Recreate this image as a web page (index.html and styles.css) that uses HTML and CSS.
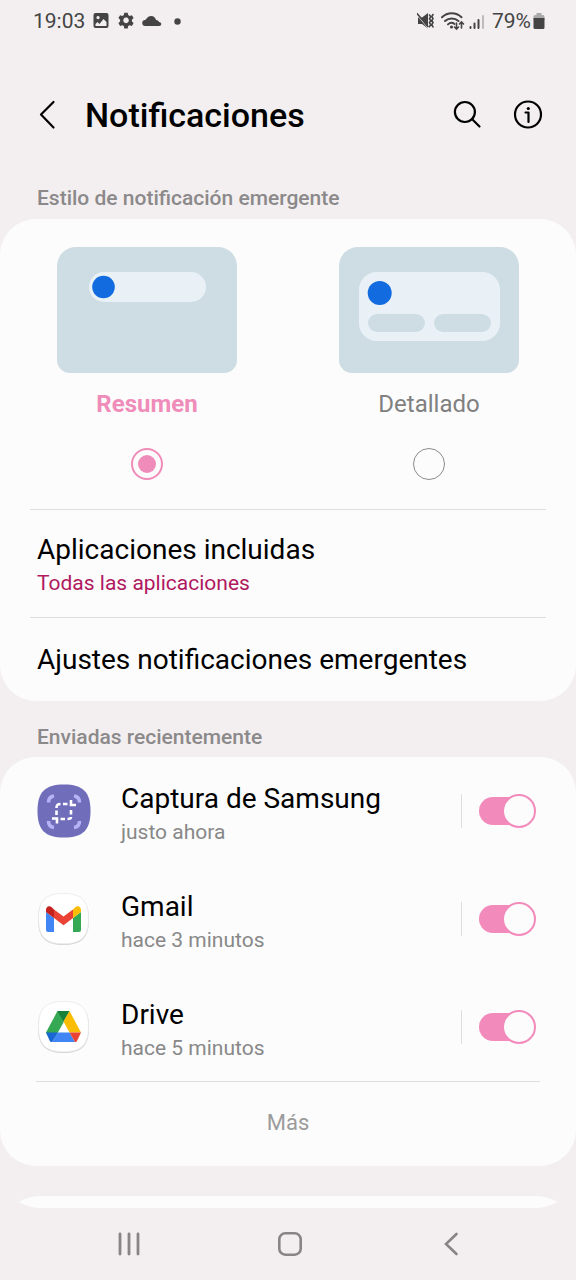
FILE: index.html
```html
<!DOCTYPE html>
<html lang="es">
<head>
<meta charset="utf-8">
<meta name="viewport" content="width=device-width, initial-scale=1">
<title>Notificaciones</title>
<link rel="stylesheet" href="styles.css">
</head>
<body>
<div class="status">
  <time class="clock">19:03</time>
  <svg class="status-left" width="90" height="18" viewBox="0 0 90 18" fill="#444" aria-hidden="true">
    <path fill-rule="evenodd" d="M2.500 1h11a2 2 0 0 1 2 2v11a2 2 0 0 1-2 2h-11a2 2 0 0 1-2-2V3a2 2 0 0 1 2-2zM2.500 12v2h11v-4l-3-3-4 5-2-2zM5 4a1.600 1.600 0 1 0 .1 0z"/>
    <path fill-rule="evenodd" d="M31.300 .8h3.400l.5 2.200 1.500.9 2.200-.7 1.700 2.900-1.700 1.600v1.700l1.700 1.600-1.700 2.900-2.200-.7-1.500.9-.5 2.300h-3.400l-.5-2.300-1.500-.9-2.200.7-1.700-2.900 1.700-1.600V7.700l-1.700-1.600 1.700-2.900 2.200.7 1.500-.9zM33 5.600a2.800 2.800 0 1 0 .1 0z"/>
    <path d="M52.500 14a3 3 0 0 1-.5-6C53.500 7.500 54.500 4 58 4c3 0 4.500 2 5 4 2 0 2.500 1 3 2 3 0 3 4 0 4z"/>
    <circle cx="84.500" cy="9.500" r="3.200"/>
  </svg>
  <svg class="status-right" width="70" height="20" viewBox="0 0 70 20" fill="none" stroke="#444" stroke-width="2" stroke-linecap="round" aria-hidden="true">
    <path d="M1 6.500h4l6-4.500v15.500L5 13H1z" fill="#444" stroke="none"/>
    <path d="M0 4l11 13" stroke="#f3eff0" stroke-width="1"/>
    <path d="M0 2.500l11 13" stroke-width="1.600"/>
    <path d="M12.500 4l1.200 1.700-1.200 2 1.200 2-1.200 2 1.200 2-1.200 2M16 3.500l-1.200 2 1.200 2-1.200 2 1.200 2-1.200 2 1.200 2.500" stroke-width="1.600"/>
    <path d="M25 6.200a14 14 0 0 1 19.500 0M28 10a10 10 0 0 1 13.500 0M31 13.400a5 5 0 0 1 6.500-.4"/>
    <circle cx="34.500" cy="16" r="1.600" fill="#444" stroke="none"/>
    <path d="M39.500 12v6m-2-2l2 2 2-2M44.500 17v-6m-2 2l2-2 2 2" stroke-width="1.600"/>
    <path d="M53.500 16v1M57.500 12.500v4.500M61.500 9v8"/>
    <path d="M66 5v12" stroke="#bbb"/>
  </svg>
  <span class="charge">79%</span>
  <svg width="12" height="18" viewBox="0 0 12 18" aria-hidden="true">
    <path d="M3.500 1h5v2H10a1.500 1.500 0 0 1 1.500 1.500V8H.5V4.500A1.500 1.500 0 0 1 2 3h1.500z" fill="#aaa"/>
    <path d="M.5 6h11v9.500A1.500 1.500 0 0 1 10 17H2A1.500 1.500 0 0 1 .5 15.500z" fill="#444"/>
  </svg>
</div>

<header class="header">
  <button class="icon-button" aria-label="Atrás">
    <svg width="20" height="30" viewBox="0 0 20 30" fill="none" stroke="#000" stroke-width="2.200" stroke-linecap="round" stroke-linejoin="round"><path d="M16.500 2L4 14.500l12.500 13"/></svg>
  </button>
  <h1 class="title">Notificaciones</h1>
  <button class="icon-button" aria-label="Buscar">
    <svg width="30" height="30" viewBox="0 0 30 30" fill="none" stroke="#000" stroke-width="2.200" stroke-linecap="round"><circle cx="12.900" cy="12" r="10"/><path d="M20.200 19.300l7.300 7.200"/></svg>
  </button>
  <button class="icon-button" aria-label="Información">
    <svg width="30" height="30" viewBox="0 0 30 30" fill="none" stroke="#000" stroke-width="2.200" stroke-linecap="round" stroke-linejoin="round"><circle cx="15" cy="14.500" r="13"/><path d="M12.500 12.500h3V22"/><circle cx="15.300" cy="8.500" r="1.600" fill="#000" stroke="none"/></svg>
  </button>
</header>

<main>
  <h2 class="section-label" id="style-label">Estilo de notificación emergente</h2>
  <section class="card">
    <div class="styles" role="radiogroup" aria-labelledby="style-label">
      <label class="style">
        <svg width="180" height="126" viewBox="0 0 180 126" aria-hidden="true">
          <path d="M19 0h142a19 19 0 0 1 19 19v94a13 13 0 0 1-13 13H13a13 13 0 0 1-13-13V19A19 19 0 0 1 19 0z" fill="#cedde4"/>
          <rect x="32" y="25" width="117" height="30" rx="15" fill="#e9f1f7"/>
          <circle cx="46.500" cy="40" r="11.300" fill="#126ce0"/>
        </svg>
        <span class="style-name">Resumen</span>
        <input class="radio" type="radio" name="style" checked>
      </label>
      <label class="style">
        <svg width="180" height="126" viewBox="0 0 180 126" aria-hidden="true">
          <path d="M19 0h142a19 19 0 0 1 19 19v94a13 13 0 0 1-13 13H13a13 13 0 0 1-13-13V19A19 19 0 0 1 19 0z" fill="#cedde4"/>
          <rect x="20" y="25" width="141" height="69" rx="18" fill="#e9f1f7"/>
          <circle cx="40.700" cy="46" r="12" fill="#126ce0"/>
          <rect x="29" y="67" width="57" height="18" rx="9" fill="#cedde4"/>
          <rect x="95" y="67" width="57" height="18" rx="9" fill="#cedde4"/>
        </svg>
        <span class="style-name">Detallado</span>
        <input class="radio" type="radio" name="style">
      </label>
    </div>
    <button class="item">
      <span class="name">Aplicaciones incluidas</span>
      <span class="detail accent">Todas las aplicaciones</span>
    </button>
    <button class="item single">
      <span class="name">Ajustes notificaciones emergentes</span>
    </button>
  </section>

  <h2 class="section-label recent">Enviadas recientemente</h2>
  <section class="card">
    <div class="app">
      <svg width="54" height="54" viewBox="0 0 54 54" aria-hidden="true">
        <path d="M27 .5C46 .5 53.500 8 53.500 27S46 53.500 27 53.500 .5 46 .5 27 8 .5 27 .5z" fill="#706dbb"/>
        <g fill="none" stroke="#b5b3f5" stroke-width="3.600"><path d="M11.500 18.500c0-4 1.500-6 5.500-6.500M37 12c4 .5 5.500 2.500 5.500 6.500M11.500 37c0 4 1.500 6 5.500 6.500M37 43.500c4-.5 5.500-2.500 5.500-6.500"/></g>
        <g fill="none" stroke="#fff" stroke-width="2.600"><path d="M19.500 24c0-3 1-4 4-4M26 20h4.500M19.500 26.500v4.500M34 16v5h5M34 26v4.500M34 33c0 1.500-1 2-3.500 2M28 35h-4.500M15 34.500h5v5"/></g>
      </svg>
      <label class="app-text" for="app-captura"><span class="name">Captura de Samsung</span><span class="detail">justo ahora</span></label>
      <span class="separator"></span>
      <input class="switch" id="app-captura" type="checkbox" role="switch" checked>
    </div>
    <div class="app">
      <svg width="54" height="54" viewBox="0 0 54 54" aria-hidden="true">
        <path d="M26.500 2C44.500 2 52 9 52 27.500S44.500 53 26.500 53 1 46 1 27.500 8.500 2 26.500 2z" fill="#d5d5d5"/>
        <path d="M26.500 1.500c18 0 25 7 25 25s-7 25.300-25 25.300-25-7.300-25-25.300 7-25 25-25z" fill="#fff" stroke="#e8e8e8" stroke-width=".8"/>
        <path d="M9 20l8 6v14h-6a2 2 0 0 1-2-2z" fill="#4285f4"/>
        <path d="M36 26l8-6v18a2 2 0 0 1-2 2h-6z" fill="#34a853"/>
        <path d="M17 17.500l9.500 7 9.500-7V26l-9.500 7.200L17 26z" fill="#ea4335"/>
        <path d="M9 20v-2c0-4 4-5 6.500-2l1.500 1.500V26z" fill="#c5221f"/>
        <path d="M44 20v-2c0-4-4-5-6.500-2L36 17.500V26z" fill="#fbbc04"/>
      </svg>
      <label class="app-text" for="app-gmail"><span class="name">Gmail</span><span class="detail">hace 3 minutos</span></label>
      <span class="separator"></span>
      <input class="switch" id="app-gmail" type="checkbox" role="switch" checked>
    </div>
    <div class="app">
      <svg width="54" height="54" viewBox="0 0 54 54" aria-hidden="true">
        <path d="M26.500 2C44.500 2 52 9 52 27.500S44.500 53 26.500 53 1 46 1 27.500 8.500 2 26.500 2z" fill="#d5d5d5"/>
        <path d="M26.500 1.500c18 0 25 7 25 25s-7 25.300-25 25.300-25-7.300-25-25.300 7-25 25-25z" fill="#fff" stroke="#e8e8e8" stroke-width=".8"/>
        <path d="M20.500 11h2l4 11.500L18 37.500 14.800 42 9 32.500z" fill="#34a853"/>
        <path d="M20.500 11h12l-6 11z" fill="#188038"/>
        <path d="M32.500 11L44 32.500H32.500L26.500 21.500z" fill="#fbbc04"/>
        <path d="M9 32.500h12L14.800 42c-1 0-1.800-.5-2-1z" fill="#1967d2"/>
        <path d="M21 32.500h11.500L38 42H14.800z" fill="#4285f4"/>
        <path d="M32.500 32.500H44L40 41c-.5.700-1 1-2 1z" fill="#ea4335"/>
      </svg>
      <label class="app-text" for="app-drive"><span class="name">Drive</span><span class="detail">hace 5 minutos</span></label>
      <span class="separator"></span>
      <input class="switch" id="app-drive" type="checkbox" role="switch" checked>
    </div>
    <button class="more">Más</button>
  </section>
  <div class="next-card"><div class="edge edge-top"></div><div class="edge edge-bottom"></div></div>
</main>

<nav class="navbar">
  <button class="nav-button" aria-label="Recientes"><svg width="26" height="26" viewBox="0 0 26 26" stroke="#878586" stroke-width="2.800" stroke-linecap="round"><path d="M4 3v20M13 3v20M22 3v20"/></svg></button>
  <button class="nav-button" aria-label="Inicio"><svg width="26" height="26" viewBox="0 0 26 26" fill="none" stroke="#878586" stroke-width="2.600"><rect x="2.300" y="2.300" width="21.400" height="21.400" rx="6"/></svg></button>
  <button class="nav-button" aria-label="Atrás"><svg width="26" height="26" viewBox="0 0 26 26" fill="none" stroke="#878586" stroke-width="2.600" stroke-linecap="round"><path d="M18.500 3l-10.500 10 10.500 10"/></svg></button>
</nav>
</body>
</html>
```

FILE: styles.css
```css
*,
*::before,
*::after { box-sizing: border-box; }

body {
  margin: 0;
  background: #f3eff0;
  color: #000;
  font-family: Roboto, "Noto Sans", sans-serif;
}

svg { display: block; flex: none; }

button {
  margin: 0;
  padding: 0;
  border: 0;
  background: none;
  color: inherit;
  font: inherit;
  cursor: pointer;
}

.status {
  display: flex;
  align-items: center;
  height: 42px;
  padding: 0 31px 0 33px;
  color: #444;
  font-size: 21px;
}
.status-left { margin-left: 8px; }
.status-right { margin-left: auto; }
.charge { margin: 0 2px 0 5px; }

.header {
  display: flex;
  align-items: center;
  padding: 45px 28px 39px 27px;
}
.icon-button {
  display: flex;
  align-items: center;
  justify-content: center;
  width: 40px;
  height: 56px;
}
.icon-button + .icon-button { margin-left: 21px; }
.title {
  flex: 1;
  margin: 0 0 0 18px;
  font-size: 34px;
  line-height: 56px;
  font-weight: 500;
}

.section-label {
  margin: 0;
  padding: 0 37px 5px;
  color: #8b898a;
  font-size: 21px;
  line-height: 32px;
  font-weight: 500;
}
.recent { padding: 20px 37px 4px; }

.card {
  border-radius: 36px;
  background: #fcfcfc;
}

.styles {
  display: grid;
  grid-template-columns: 1fr 1fr;
  padding: 28px 6px 29px;
}
.style {
  display: flex;
  flex-direction: column;
  align-items: center;
}
.style-name {
  margin: 15px 0 28px;
  color: #808080;
  font-size: 24px;
  line-height: 32px;
}
.style:has(:checked) .style-name {
  color: #f08cb9;
  font-weight: 700;
}

.radio {
  appearance: none;
  display: grid;
  place-items: center;
  width: 32px;
  height: 32px;
  margin: 0;
  border: 1px solid #8c8c8c;
  border-radius: 50%;
}
.radio:checked { border: 2px solid #f08cb9; }
.radio:checked::before {
  content: "";
  width: 18px;
  height: 18px;
  border-radius: 50%;
  background: #f08cb9;
}

.item {
  display: block;
  width: calc(100% - 60px);
  margin: 0 30px;
  padding: 23px 7px 18px;
  border-top: 1px solid #dedede;
  text-align: left;
}
.single { padding: 25px 7px 24px; }

.name {
  display: block;
  font-size: 28px;
  line-height: 34px;
}
.detail {
  display: block;
  color: #888;
  font-size: 21px;
  line-height: 32px;
}
.accent { color: #b0195f; }

.app {
  display: flex;
  align-items: center;
  height: 108px;
  padding: 0 40px 0 37px;
}
.app-text {
  flex: 1;
  padding: 8px 0 0 30px;
}
.separator {
  width: 1px;
  height: 34px;
  margin-right: 17px;
  background: #dedede;
}

.switch {
  appearance: none;
  display: flex;
  align-items: center;
  position: relative;
  width: 57px;
  height: 34px;
  margin: 0;
}
.switch::before {
  content: "";
  width: 54px;
  height: 28px;
  border-radius: 14px;
  background: #f28abb;
}
.switch::after {
  content: "";
  position: absolute;
  top: 0;
  right: 0;
  width: 34px;
  height: 34px;
  border: 2px solid #f28abb;
  border-radius: 50%;
  background: #fcfcfc;
}
.switch:not(:checked)::before { background: #c4c4c4; }
.switch:not(:checked)::after {
  right: auto;
  left: 0;
  border-color: #c4c4c4;
}

.more {
  display: block;
  width: calc(100% - 72px);
  margin: 0 36px;
  padding: 24px 0 26px;
  border-top: 1px solid #dedede;
  color: #9b9b9b;
  font-size: 22px;
  line-height: 34px;
}

.next-card { padding-top: 30px; }
.edge {
  display: flex;
  height: 6px;
  overflow: hidden;
}
.edge::before {
  content: "";
  flex: 1;
  flex-shrink: 0;
  height: 80px;
  border-radius: 40px;
  background: #fcfcfc;
}
.edge-bottom { align-items: flex-end; }

.navbar {
  display: grid;
  grid-template-columns: repeat(3, 1fr);
  padding: 0 45px 0 49px;
}
.nav-button {
  display: flex;
  align-items: center;
  justify-content: center;
  height: 72px;
}
```
